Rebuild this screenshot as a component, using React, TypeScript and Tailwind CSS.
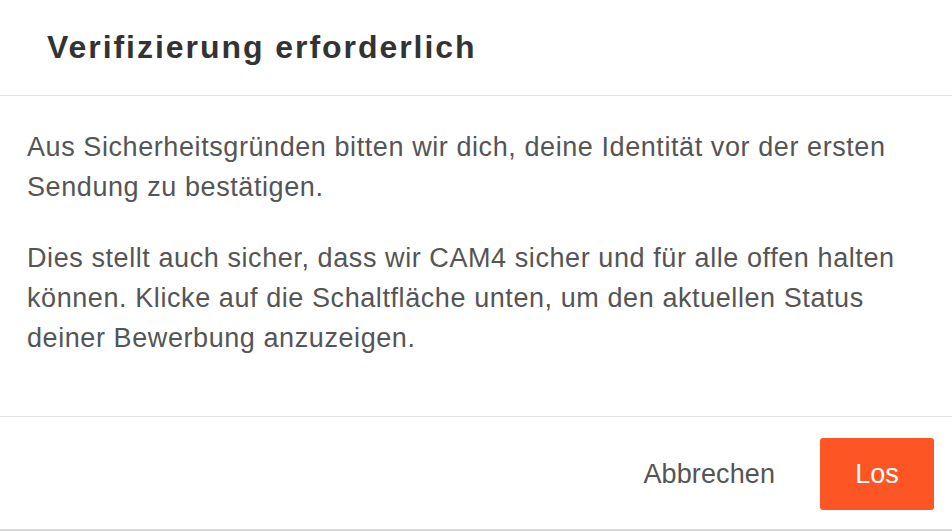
import React from 'react';

export default function App() {
  return (
    <div className="w-[952px] h-[532px] bg-white overflow-hidden" style={{ fontFamily: '"Liberation Sans", Arial, sans-serif' }}>
      {/* Header */}
      <div className="h-[96px] flex items-center pl-[47px] border-b border-[#e2e2e2]">
        <h2 className="text-[32px] font-bold text-[#333] tracking-[1.95px] pb-[2px]">Verifizierung erforderlich</h2>
      </div>

      {/* Body */}
      <div className="px-[27px] pt-[31px] pb-[58px] text-[27px] leading-[40px] tracking-[0.58px] text-[#555]">
        <p className="mb-[31px]">
          Aus Sicherheitsgründen bitten wir dich, deine Identität vor der ersten Sendung zu bestätigen.
        </p>
        <p>
          Dies stellt auch sicher, dass wir CAM4 sicher und für alle offen halten können. Klicke auf die Schaltfläche unten, um den aktuellen Status deiner Bewerbung anzuzeigen.
        </p>
      </div>

      {/* Footer */}
      <div className="border-t border-[#e2e2e2] border-b-2 border-b-[#dadada] pt-[21px] pb-[19px] pr-[18px] flex items-center justify-end gap-[45px]">
        <button className="text-[27px] tracking-[0.1px] text-[#555]">Abbrechen</button>
        <button className="w-[114px] h-[72px] rounded-[3px] bg-[#fd5524] text-white text-[27px]">Los</button>
      </div>
    </div>
  );
}
